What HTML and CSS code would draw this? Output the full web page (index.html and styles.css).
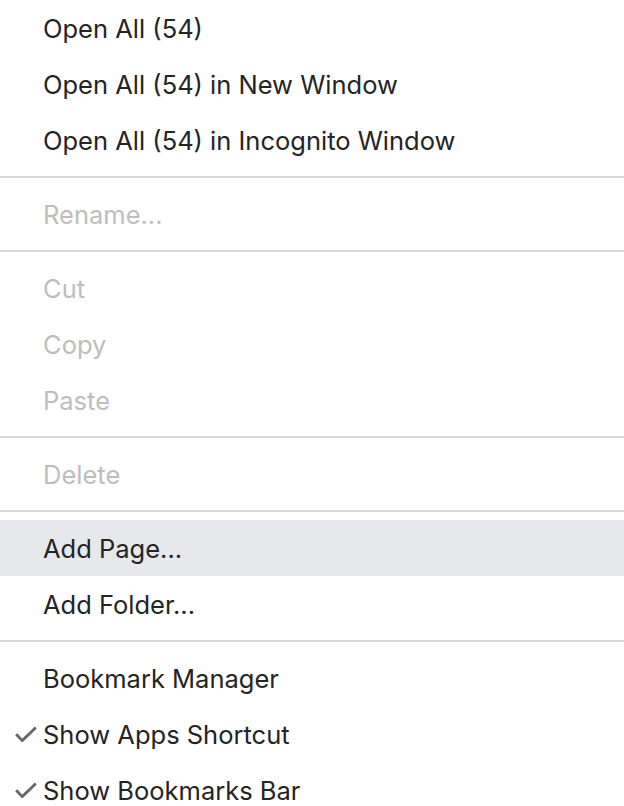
FILE: index.html
```html
<!DOCTYPE html>
<html>
<head>
<meta charset="utf-8">
<link rel="stylesheet" href="styles.css">
</head>
<body>
<div class="menu">
  <div class="item">Open All (54)</div>
  <div class="item">Open All (54) in New Window</div>
  <div class="item">Open All (54) in Incognito Window</div>
  <div class="sep"></div>
  <div class="item disabled">Rename...</div>
  <div class="sep"></div>
  <div class="item disabled">Cut</div>
  <div class="item disabled">Copy</div>
  <div class="item disabled">Paste</div>
  <div class="sep"></div>
  <div class="item disabled">Delete</div>
  <div class="sep"></div>
  <div class="item hover">Add Page...</div>
  <div class="item">Add Folder...</div>
  <div class="sep"></div>
  <div class="item">Bookmark Manager</div>
  <div class="item"><svg class="check" viewBox="0 0 22 16"><path d="M1.2 8.2 L7.3 14.6 L20.8 1.4" fill="none" stroke="#666666" stroke-width="2.8"/></svg>Show Apps Shortcut</div>
  <div class="item"><svg class="check" viewBox="0 0 22 16"><path d="M1.2 8.2 L7.3 14.6 L20.8 1.4" fill="none" stroke="#666666" stroke-width="2.8"/></svg>Show Bookmarks Bar</div>
</div>
</body>
</html>
```

FILE: styles.css
```css
html, body {
  margin: 0;
  padding: 0;
  background: #ffffff;
  overflow: hidden;
}
.menu {
  width: 624px;
  display: flex;
  flex-direction: column;
  font-family: Inter, "Noto Sans", sans-serif;
  font-size: 25.5px;
  letter-spacing: 0;
  color: #242424;
}
.item {
  position: relative;
  height: 56px;
  line-height: 57px;
  padding-left: 43px;
  white-space: nowrap;
}
.item.disabled {
  color: #bdbdbd;
}
.item.hover {
  background: #e7e8ec;
}
.sep {
  height: 2px;
  margin: 8px 0;
  background: #d9d9d9;
}
.check {
  position: absolute;
  left: 15px;
  top: 20px;
  width: 22px;
  height: 16px;
}
```
